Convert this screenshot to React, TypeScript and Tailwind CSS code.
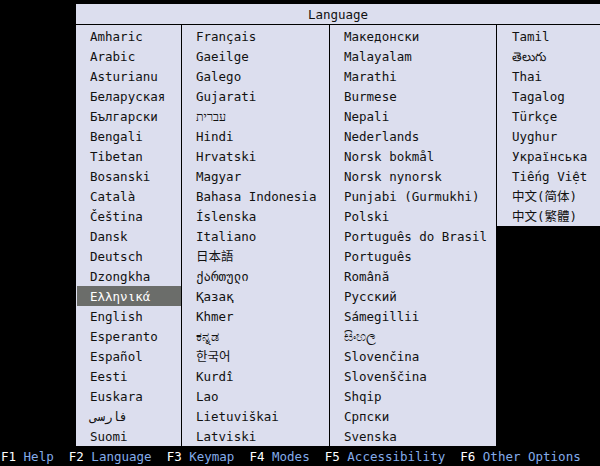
const columns: string[][] = [
  [
    "Amharic", "Arabic", "Asturianu", "Беларуская", "Български", "Bengali", "Tibetan",
    "Bosanski", "Català", "Čeština", "Dansk", "Deutsch", "Dzongkha", "Ελληνικά",
    "English", "Esperanto", "Español", "Eesti", "Euskara", "فارسی", "Suomi",
  ],
  [
    "Français", "Gaeilge", "Galego", "Gujarati", "עברית", "Hindi", "Hrvatski", "Magyar",
    "Bahasa Indonesia", "Íslenska", "Italiano", "日本語", "ქართული", "Қазақ", "Khmer",
    "ಕನ್ನಡ", "한국어", "Kurdî", "Lao", "Lietuviškai", "Latviski",
  ],
  [
    "Македонски", "Malayalam", "Marathi", "Burmese", "Nepali", "Nederlands", "Norsk bokmål",
    "Norsk nynorsk", "Punjabi (Gurmukhi)", "Polski", "Português do Brasil", "Português",
    "Română", "Русский", "Sámegillii", "සිංහල", "Slovenčina", "Slovenščina", "Shqip",
    "Српски", "Svenska",
  ],
  [
    "Tamil", "తెలుగు", "Thai", "Tagalog", "Türkçe", "Uyghur", "Українська", "Tiếng Việt",
    "中文(简体)", "中文(繁體)",
  ],
];

const widths = ["w-[106px]", "w-[148px]", "w-[167px]", "w-[103px]"];
const selected = "Ελληνικά";

const keys = [
  ["F1", "Help"],
  ["F2", "Language"],
  ["F3", "Keymap"],
  ["F4", "Modes"],
  ["F5", "Accessibility"],
  ["F6", "Other Options"],
];

export default function App() {
  return (
    <div
      className="w-[600px] h-[466px] bg-black flex flex-col text-[12.5px] leading-[20px] text-[#111]"
      style={{ fontFamily: '"DejaVu Sans Mono", "Noto Sans CJK SC", monospace' }}
    >
      <div className="pt-[4px] pl-[76px]">
        <div className="h-[442px] flex flex-col">
          <div className="h-[21px] pt-[2px] bg-[#dcdeee] border-b border-black flex items-center justify-center">
            Language
          </div>
          <div className="flex flex-1">
            {columns.map((col, ci) => (
              <div
                key={ci}
                className={
                  ci < 3
                    ? `${widths[ci]} bg-[#dcdeee] border-r border-black pt-[1px]`
                    : `${widths[ci]}`
                }
              >
                <div className={ci === 3 ? "bg-[#dcdeee] pt-[1px]" : ""}>
                  {col.map((name) => (
                    <div
                      key={name}
                      className={
                        name === selected
                          ? "h-[20px] leading-[22px] ml-[1px] pl-[13px] bg-[#6b6d6a] text-white whitespace-nowrap"
                          : ci === 3
                          ? "h-[20px] leading-[22px] pl-[15px] whitespace-nowrap"
                          : "h-[20px] leading-[22px] pl-[14px] whitespace-nowrap"
                      }
                    >
                      {name}
                    </div>
                  ))}
                </div>
              </div>
            ))}
          </div>
        </div>
      </div>
      <div className="h-[20px] pt-[2px] pl-[1px] flex items-center whitespace-pre">
        {keys.map(([k, label], i) => (
          <span key={k}>
            <span className="text-white">{k} </span>
            <span className="text-[#84acea]">{label}</span>
            {i < keys.length - 1 ? "  " : ""}
          </span>
        ))}
      </div>
    </div>
  );
}
